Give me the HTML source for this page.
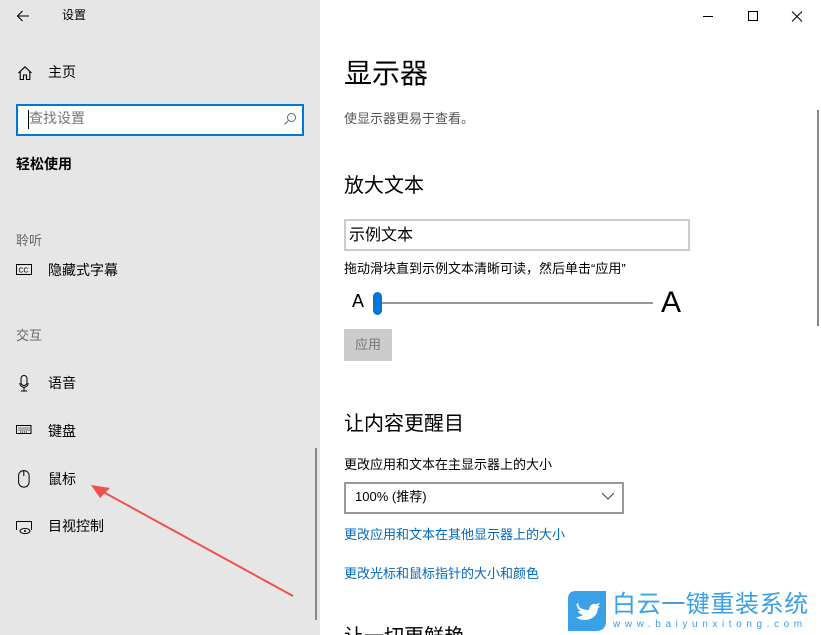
<!DOCTYPE html>
<html style="width:821px;height:635px;overflow:hidden"><head><meta charset="utf-8">
<style>
*{margin:0;padding:0;box-sizing:border-box}
body{width:821px;height:635px;overflow:hidden;background:#fff;font-family:"Liberation Sans","Noto Sans CJK SC",sans-serif;position:relative;color:#000;line-height:1.4}
.a{position:absolute;white-space:nowrap}
#side{position:absolute;left:0;top:0;width:320px;height:635px;background:#e6e6e6}
.t14{font-size:14px}
svg{position:absolute}
</style></head><body>
<div id="side">
<svg style="left:16px;top:9px" width="14" height="14" viewBox="0 0 14 14"><path d="M13 7H1.5M6.5 2L1.5 7l5 5" stroke="#000" stroke-width="1.1" fill="none"/></svg>
<div class="a" style="left:62px;top:7px;font-size:12px">设置</div>
<svg style="left:17px;top:65px" width="16" height="16" viewBox="0 0 16 16"><path d="M1.5 8L8 1.8 14.5 8M3.2 6.5V14.5H6.5V10h3v4.5h3.3V6.5" stroke="#000" stroke-width="1.1" fill="none"/></svg>
<div class="a t14" style="left:48px;top:63px">主页</div>
<div class="a" style="left:16px;top:104px;width:288px;height:32px;border:2px solid #0078d7;background:#fff"></div>
<div class="a" style="left:28px;top:110px;width:1px;height:19px;background:#000"></div>
<div class="a t14" style="left:29px;top:109px;color:#777">查找设置</div>
<svg style="left:283px;top:112px" width="14" height="14" viewBox="0 0 14 14"><circle cx="8.5" cy="5.5" r="4" stroke="#666" fill="none"/><path d="M5.5 8.5L1.5 12.5" stroke="#666"/></svg>
<div class="a t14" style="left:16px;top:155px;font-weight:bold">轻松使用</div>
<div class="a" style="left:16px;top:232px;font-size:13px;color:#666">聆听</div>
<svg style="left:16px;top:264px" width="17" height="12" viewBox="0 0 17 12"><rect x=".5" y=".5" width="15" height="10" stroke="#000" fill="none"/><text x="2.5" y="8.5" font-size="7" font-family="Liberation Sans">CC</text></svg>
<div class="a t14" style="left:48px;top:261px">隐藏式字幕</div>
<div class="a" style="left:16px;top:327px;font-size:13px;color:#666">交互</div>
<svg style="left:19px;top:375px" width="10" height="17" viewBox="0 0 10 17"><rect x="2" y=".5" width="6" height="10" rx="3" stroke="#000" fill="none"/><path d="M.8 8a4.2 4.2 0 0 0 8.4 0M5 12.3v3.5M2 16h6" stroke="#000" fill="none"/></svg>
<div class="a t14" style="left:48px;top:374px">语音</div>
<svg style="left:16px;top:425px" width="16" height="10" viewBox="0 0 16 10"><rect x=".5" y=".5" width="14.5" height="8" stroke="#000" fill="none"/><path d="M2.5 3h11M2.5 5h11M4 7h8" stroke="#000" stroke-dasharray="1 1"/></svg>
<div class="a t14" style="left:48px;top:422px">键盘</div>
<svg style="left:18px;top:470px" width="12" height="18" viewBox="0 0 12 18"><rect x=".6" y=".6" width="10.5" height="16.5" rx="5" stroke="#000" fill="none"/><path d="M5.8 1v5" stroke="#000"/></svg>
<div class="a t14" style="left:48px;top:470px">鼠标</div>
<svg style="left:16px;top:521px" width="17" height="14" viewBox="0 0 17 14"><path d="M.5 9V.5h15V9" stroke="#000" fill="none"/><ellipse cx="9" cy="10" rx="5" ry="2.5" stroke="#000" fill="none"/><circle cx="9" cy="10" r="1" fill="#000"/></svg>
<div class="a t14" style="left:48px;top:517px">目视控制</div>
<div class="a" style="left:315px;top:448px;width:2px;height:172px;background:#888"></div>
<svg style="left:88px;top:482px" width="210" height="118" viewBox="0 0 210 118"><path d="M205 114L8 6" stroke="#f05050" stroke-width="2"/><path d="M3 3L22 6 12 16Z" fill="#f05050"/></svg>
</div>
<svg style="left:703px;top:10px" width="100" height="14" viewBox="0 0 100 14"><path d="M0 6.5h10" stroke="#000"/><rect x="45.5" y="1.5" width="9" height="9" stroke="#000" fill="none"/><path d="M89 1.5l10 10M99 1.5l-10 10" stroke="#000"/></svg>
<div class="a" style="left:817px;top:110px;width:2px;height:216px;background:#888"></div>
<div class="a" style="left:344px;top:54px;font-size:28px">显示器</div>
<div class="a" style="left:344px;top:110px;font-size:13px;color:#555">使显示器更易于查看。</div>
<div class="a" style="left:344px;top:172px;font-size:20px">放大文本</div>
<div class="a" style="left:344px;top:219px;width:346px;height:32px;border:2px solid #ccc"></div>
<div class="a" style="left:349px;top:225px;font-size:16px">示例文本</div>
<div class="a" style="left:344px;top:260px;font-size:13px">拖动滑块直到示例文本清晰可读，然后单击“应用”</div>
<div class="a" style="left:352px;top:289px;font-size:18px">A</div>
<div class="a" style="left:377px;top:302px;width:276px;height:2px;background:#999"></div>
<div class="a" style="left:373px;top:292px;width:9px;height:23px;border-radius:5px;background:#0078d7"></div>
<div class="a" style="left:661px;top:282px;font-size:30px">A</div>
<div class="a" style="left:344px;top:329px;width:48px;height:32px;background:#ccc;color:#777;font-size:13px;text-align:center;line-height:32px">应用</div>
<div class="a" style="left:344px;top:410px;font-size:20px">让内容更醒目</div>
<div class="a" style="left:344px;top:456px;font-size:13px">更改应用和文本在主显示器上的大小</div>
<div class="a" style="left:344px;top:482px;width:280px;height:32px;border:2px solid #999"></div>
<div class="a" style="left:355px;top:488px;font-size:13px">100% (推荐)</div>
<svg style="left:601px;top:492px" width="14" height="8" viewBox="0 0 14 8"><path d="M1 1l6 6 6-6" stroke="#444" fill="none"/></svg>
<div class="a" style="left:344px;top:526px;font-size:13px;color:#0067c0">更改应用和文本在其他显示器上的大小</div>
<div class="a" style="left:344px;top:565px;font-size:13px;color:#0067c0">更改光标和鼠标指针的大小和颜色</div>
<div class="a" style="left:344px;top:623px;font-size:20px">让一切更鲜艳</div>
<div class="a" style="left:560px;top:585px;width:261px;height:50px;background:#fff"></div>
<svg style="left:568px;top:591px" width="38" height="40" viewBox="0 0 38 40"><path d="M8 0H38V30Q38 40 28 40H0V8Q0 0 8 0Z" fill="#3aa0e8"/><path d="M8 14q6 5 13 5q1-7 7-6l4-1-2 3 2 1-2 1q-1 11-13 12-6 0-9-3 4 0 7-2-4-1-5-4h3q-4-2-4-5 1 1 3 1-3-2-1-5z" fill="#fff"/></svg>
<div class="a" style="left:612px;top:591px;font-size:24px;letter-spacing:0.6px;color:#3aa0e8;line-height:1.2">白云一键重装系统</div>
<div class="a" style="left:613px;top:619px;font-size:10px;letter-spacing:4.6px;color:#3aa0e8;line-height:1.2">www.baiyunxitong.com</div>
</body></html>
